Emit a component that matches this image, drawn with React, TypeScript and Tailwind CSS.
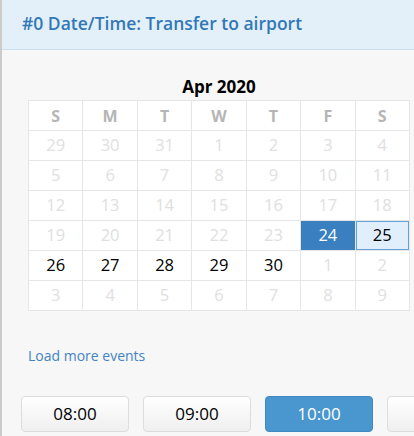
const days = [
  [29, 30, 31, 1, 2, 3, 4],
  [5, 6, 7, 8, 9, 10, 11],
  [12, 13, 14, 15, 16, 17, 18],
  [19, 20, 21, 22, 23, 24, 25],
  [26, 27, 28, 29, 30, 1, 2],
  [3, 4, 5, 6, 7, 8, 9],
];

function dayCell(day: number, row: number) {
  const enabled = (row === 3 && day >= 24) || (row === 4 && day >= 26);
  const selected = enabled && day === 24;
  const hovered = enabled && day === 25;

  let cls = "bg-white text-[#e0e0e0]";
  if (selected) cls = "bg-[#3a7fc0] text-white";
  else if (hovered) cls = "bg-[#e0effb] text-black shadow-[inset_0_0_0_1px_#65a3d6]";
  else if (enabled) cls = "bg-white text-black";

  return (
    <div
      key={`${row}-${day}`}
      className={`flex h-[30px] items-center justify-center border-b border-r border-[#e6e6e6] text-[16.5px] ${cls}`}
    >
      {day}
    </div>
  );
}

export default function App() {
  return (
    <div className="h-[436px] w-[414px] overflow-hidden border-l-2 border-[#cccccc] bg-[#f7f7f7] font-['Open_Sans',sans-serif]">
      <div className="flex h-[50px] items-center border-b border-[#cbdfee] bg-[#e3f0fa] pl-[20px] pb-[2px]">
        <h2 className="text-[17.5px] font-semibold text-[#3278b6]">#0 Date/Time: Transfer to airport</h2>
      </div>

      <div className="pl-[26px]">
        <div className="mt-[25px] w-[382px] text-center text-[17px] font-bold leading-[24px] text-black">Apr 2020</div>

        <div className="mt-[1px] grid w-[382px] grid-cols-7 border-l border-t border-[#e6e6e6]">
          {["S", "M", "T", "W", "T", "F", "S"].map((d, i) => (
            <div
              key={i}
              className="flex h-[30px] items-center justify-center border-b border-r border-[#e6e6e6] bg-white text-[16px] font-bold text-[#b5b5b5]"
            >
              {d}
            </div>
          ))}
          {days.map((week, r) => week.map((d) => dayCell(d, r)))}
        </div>

        <div className="mt-[34px] text-[14px] text-[#4583c3]">Load more events</div>
      </div>

      <div className="mt-[30px] flex gap-[14px] pl-[19px]">
        {["08:00", "09:00", "10:00", ""].map((t, i) => (
          <button
            key={i}
            type="button"
            className={[
              "h-[36px] w-[108px] shrink-0 rounded-[4px] border text-[17px]",
              t === "10:00"
                ? "border-[#3f88c3] bg-[#4a96cf] text-white"
                : "border-[#dddddd] bg-gradient-to-b from-white to-[#efefef] text-black",
            ].join(" ")}
          >
            {t}
          </button>
        ))}
      </div>
    </div>
  );
}
